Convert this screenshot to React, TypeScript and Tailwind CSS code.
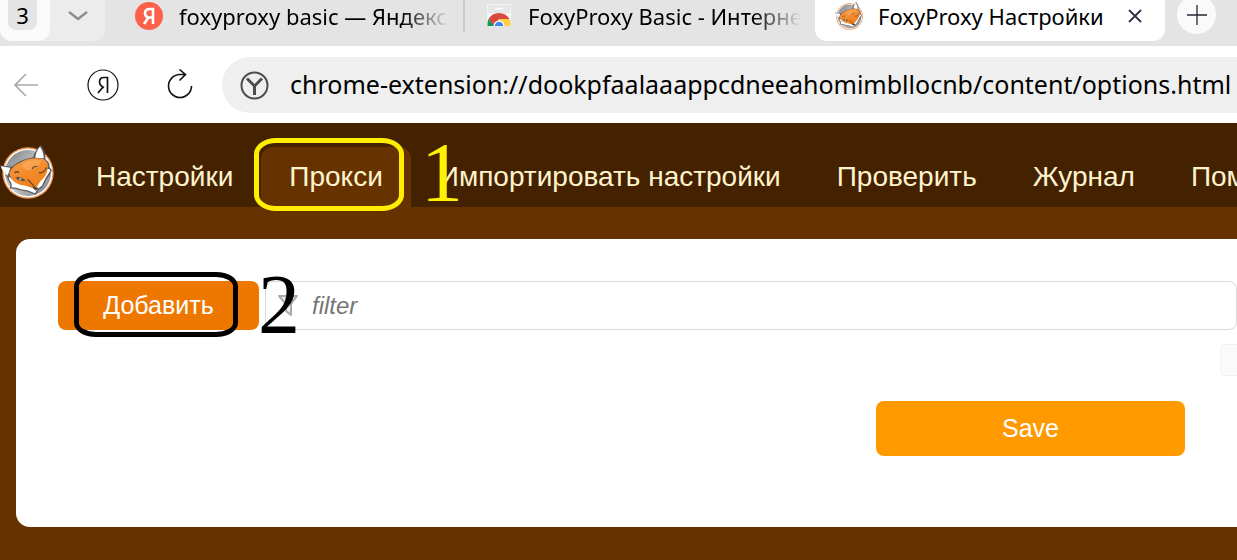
import { useId } from 'react';
import type { ReactNode } from 'react';
import clsx from 'clsx';

const navItems = [
  { label: 'Настройки' },
  { label: 'Прокси', active: true },
  { label: 'Импортировать настройки' },
  { label: 'Проверить' },
  { label: 'Журнал' },
  { label: 'Помощь' },
];

function FoxLogo({ className }: { className: string }) {
  const metal = useId();
  const fur = useId();
  return (
    <svg viewBox="0 0 162 162" className={className} aria-hidden="true">
      <defs>
        <linearGradient id={metal} x1="0" y1="0" x2="1" y2="1">
          <stop offset="0" stopColor="#77797c" />
          <stop offset="0.5" stopColor="#c9cacb" />
          <stop offset="1" stopColor="#77797c" />
        </linearGradient>
        <linearGradient id={fur} x1="0" y1="0" x2="0.4" y2="1">
          <stop offset="0" stopColor="#f89a3f" />
          <stop offset="1" stopColor="#f07f1c" />
        </linearGradient>
      </defs>
      <circle cx="84" cy="84" r="77" fill="#ef9a5c" />
      <circle cx="84" cy="84" r="73" fill="#fff" />
      <circle cx="84" cy="84" r="69" fill={`url(#${metal})`} />
      <path
        d="M0 61 L35 65 Q60 44 99 37 Q106 14 122 0 Q138 20 136 43 L147 53 L150 90 L107 139 L40 125 L22 96 Z"
        fill="#5b5d60"
      />
      <path d="M2 64 L31 68 L23 92 Q8 82 2 64Z" fill="#fff" />
      <path d="M120 5 Q108 18 106 38 L131 40 Q131 20 120 5Z" fill="#fff" />
      <path
        d="M25 90 Q22 102 32 114 Q35 124 31 129 Q47 128 60 134 Q84 136 106 147 Q114 131 127 124 Q136 101 154 76 L143 66 L100 127 L45 108Z"
        fill="#fff"
        stroke="#5b5d60"
        strokeWidth="4"
        strokeLinejoin="round"
      />
      <path
        d="M28 85 Q34 65 62 52 Q92 34 130 42 Q148 51 143 73 Q140 90 128 102 Q115 113 107 135 Q88 121 62 120 Q33 112 28 85Z"
        fill={`url(#${fur})`}
      />
      <path d="M66 56 Q92 41 124 47 Q116 74 84 76 Q65 74 66 56Z" fill="#fbaa5b" opacity="0.7" />
      <path d="M97 126 L117 128 L107 137Z" fill="#3f4144" />
      <path
        d="M44 83 Q50 78 56 82 M97 71 Q102 62 110 65 M118 83 Q132 85 139 69 M84 104 L104 126"
        fill="none"
        stroke="#6b4a2c"
        strokeWidth="4"
        strokeLinecap="round"
      />
      <path d="M46 98 Q60 92 77 107 Q60 112 46 98Z" fill="#55504b" />
      <circle cx="61" cy="102" r="3" fill="#d9d9d9" />
    </svg>
  );
}

function YandexIcon() {
  return (
    <svg viewBox="0 0 28 28" className="size-7 shrink-0" aria-hidden="true">
      <circle cx="14" cy="14" r="14" fill="#fc604b" />
      <path
        d="M18 22 V7 H15 Q10 7 10 11.200 Q10 14 13 15.500 H18 M13.500 15.500 L9 22"
        fill="none"
        stroke="#fff"
        strokeWidth="2.600"
      />
    </svg>
  );
}

function WebStoreIcon() {
  return (
    <svg viewBox="0 2 26 26" className="size-[26px] shrink-0" aria-hidden="true">
      <path d="M1 3 H25 V25 H1Z" fill="#f4f4f4" />
      <path d="M2 4 H24 V12 H2Z" fill="#e6e6e6" />
      <path d="M9 7.500 H17" stroke="#fff" strokeWidth="1.500" />
      <path d="M2.500 18 Q6 12 13 12 Q20 12 23.500 18 H13 L8 25 Z" fill="#d8483b" />
      <path d="M13 18 H23.500 Q25 21 24.500 25 H13Z" fill="#fdcf41" />
      <path d="M2.500 18 L8.500 25 H1.500 Q1 21 2.500 18Z" fill="#17935a" />
      <path d="M7.500 25 A5.500 5.500 0 0 1 18.500 25Z" fill="#fff" />
      <path d="M8.800 25 A4.200 4.200 0 0 1 17.200 25Z" fill="#4285f4" />
    </svg>
  );
}

function BrowserTab({
  icon,
  title,
  className,
}: {
  icon: ReactNode;
  title: string;
  className: string;
}) {
  return (
    <div className={clsx('flex h-8 shrink-0 items-center gap-4', className)}>
      {icon}
      <span className="min-w-0 flex-1 overflow-hidden whitespace-nowrap [mask-image:linear-gradient(to_right,black_calc(100%-48px),transparent)]">
        {title}
      </span>
    </div>
  );
}

function TabStrip() {
  return (
    <div className="flex h-[46px] items-start overflow-hidden bg-[#e4e4e4] text-[22px] leading-[30px]">
      <div className="flex h-[41px] w-[105px] shrink-0 rounded-b-xl bg-[#ececec]">
        <button className="flex w-[50px] items-start rounded-b-xl bg-[#fafafa] pl-2">
          <span className="flex h-[30px] w-[29px] items-center justify-center rounded-b-lg bg-[#e4e4e4]">
            3
          </span>
        </button>
        <button aria-label="Список вкладок" className="flex h-8 flex-1 items-center justify-center">
          <svg viewBox="0 0 20 12" className="h-3 w-5" fill="none" stroke="#8d8d8d" strokeWidth="2.400">
            <path d="M1 2 L10 9 L19 2" />
          </svg>
        </button>
      </div>
      <BrowserTab
        icon={<YandexIcon />}
        title="foxyproxy basic — Яндекс: нашлось"
        className="w-[360px] border-r-2 border-[#cbcbcb] pr-3.5 pl-[30px]"
      />
      <BrowserTab
        icon={<WebStoreIcon />}
        title="FoxyProxy Basic - Интернет-магазин"
        className="w-[350px] pr-3.5 pl-[21px]"
      />
      <div className="flex h-[41px] w-[350px] shrink-0 items-start rounded-b-xl bg-white pl-5">
        <div className="flex h-8 flex-1 items-center gap-[15px]">
          <FoxLogo className="size-7 shrink-0" />
          <span className="flex-1 whitespace-nowrap">FoxyProxy Настройки</span>
        </div>
        <button aria-label="Закрыть вкладку" className="flex h-8 w-15 items-center justify-center">
          <svg viewBox="0 0 14 14" className="size-3.5" fill="none" stroke="#2c3442" strokeWidth="1.800">
            <path d="M1 1 L13 13 M13 1 L1 13" />
          </svg>
        </button>
      </div>
      <button
        aria-label="Новая вкладка"
        className="-mt-[5px] ml-3 flex size-[39px] shrink-0 items-center justify-center rounded-full bg-[#fafafa]"
      >
        <svg viewBox="0 0 20 20" className="size-5" stroke="#222833" strokeWidth="1.300">
          <path d="M10 0 V20 M0 10 H20" />
        </svg>
      </button>
    </div>
  );
}

function Toolbar() {
  return (
    <div className="flex h-[77px] items-center overflow-hidden bg-white">
      <div className="flex w-[222px] shrink-0 items-center">
        <button aria-label="Назад" className="ml-3.5">
          <svg viewBox="0 0 24 24" className="size-6" fill="none" stroke="#a9a9a9" strokeWidth="1.600">
            <path d="M24 12 H1 M12 1 L1 12 L12 23" />
          </svg>
        </button>
        <button aria-label="Яндекс" className="ml-[49px]">
          <svg viewBox="0 0 32 32" className="size-8" fill="none" stroke="#111">
            <circle cx="16" cy="16" r="15" strokeWidth="1.200" />
            <path
              d="M20.500 24 V8.500 H17 Q12.500 8.500 12.500 13 Q12.500 15.500 15 17.500 L17 18.800 M16 18 L11 24"
              strokeWidth="1.700"
            />
          </svg>
        </button>
        <button aria-label="Обновить" className="ml-12">
          <svg viewBox="0 0 26 32" className="h-8 w-[26px]" fill="none" stroke="#111" strokeWidth="1.600">
            <path d="M24.500 17 A11.500 11.500 0 1 1 13 5.500 H19 M12.500 0.500 L18.500 5.500 L12.500 11.500" />
          </svg>
        </button>
      </div>
      <label className="flex h-14 flex-1 items-center rounded-l-full bg-[#efefef] pl-[18px]">
        <svg viewBox="0 0 30 30" className="size-[30px] shrink-0" fill="none" stroke="#4c4c4c">
          <circle cx="14.500" cy="15.500" r="13" strokeWidth="2" />
          <path d="M7 8.500 L14.500 16 L22 8.500 M14.500 15.500 V25" strokeWidth="3" />
        </svg>
        <span className="sr-only">Адрес</span>
        <input
          defaultValue="chrome-extension://dookpfaalaaappcdneeahomimbllocnb/content/options.html"
          className="ml-5 min-w-0 flex-1 bg-transparent text-[25px] outline-none"
        />
      </label>
    </div>
  );
}

function OptionsNav() {
  return (
    <nav className="flex h-[84px] items-end overflow-hidden bg-[#442200]">
      <FoxLogo className="mr-3.5 mb-2 size-[54px] shrink-0" />
      {navItems.map((item) => (
        <a
          key={item.label}
          href="#"
          className={clsx(
            'h-15 shrink-0 rounded-t-xl px-7 text-[28px] leading-[60px] whitespace-nowrap text-[#fff3cf]',
            item.active && 'bg-[#663300]',
          )}
        >
          {item.label}
        </a>
      ))}
    </nav>
  );
}

function ProxyPanel() {
  return (
    <main className="bg-[#663300] py-8 pl-4">
      <section className="rounded-l-[14px] bg-white pt-[42px] pb-[71px] pl-[42px]">
        <div className="flex gap-1.5">
          <button className="h-[49px] w-[201px] shrink-0 rounded-lg bg-[#ee7700] text-[25px] text-white">
            Добавить
          </button>
          <label className="flex h-[49px] flex-1 items-center rounded-lg border border-[#d9d9dc] pl-3">
            <svg
              viewBox="0 0 20 22"
              className="h-[22px] w-5 shrink-0"
              fill="#eee"
              stroke="#aaa"
              strokeWidth="2"
              strokeLinejoin="round"
            >
              <path d="M1 1 H19 L13 9 V20 L8 16 V9Z" />
            </svg>
            <span className="sr-only">filter</span>
            <input
              placeholder="filter"
              className="ml-3.5 min-w-0 flex-1 text-[24px] italic outline-none placeholder:text-[#777]"
            />
          </label>
        </div>
        <div className="mt-3.5 flex justify-end">
          <button
            aria-label="Ещё"
            className="h-8 w-[17px] rounded-l-md border border-r-0 border-[#f0f0f0] bg-[#fafafa]"
          />
        </div>
        <div className="mt-[25px] flex justify-end pr-[52px]">
          <button className="h-[55px] w-[309px] rounded-lg bg-[#ff9900] text-[25px] text-white">
            Save
          </button>
        </div>
      </section>
    </main>
  );
}

// hand-drawn marks for the two steps, laid over the page
function StepMarks() {
  return (
    <div className="pointer-events-none font-['Liberation_Serif',serif] text-[84px] leading-none">
      <div className="absolute top-[138px] left-[254px] h-[73px] w-[150px] rounded-[22px/16px] border-5 border-[#ffee00]" />
      <span className="absolute top-[131px] left-[421px] text-[#fff200]">1</span>
      <div className="absolute top-[272px] left-[74px] h-[65px] w-[164px] rounded-[22px/14px] border-5 border-black" />
      <span className="absolute top-[263px] left-[258px] text-black">2</span>
    </div>
  );
}

export default function App() {
  return (
    <div className="relative min-h-screen overflow-hidden bg-[#663300] font-['Liberation_Sans',sans-serif]">
      <header className="font-['Noto_Sans',sans-serif] text-black">
        <TabStrip />
        <Toolbar />
      </header>
      <OptionsNav />
      <ProxyPanel />
      <StepMarks />
    </div>
  );
}
